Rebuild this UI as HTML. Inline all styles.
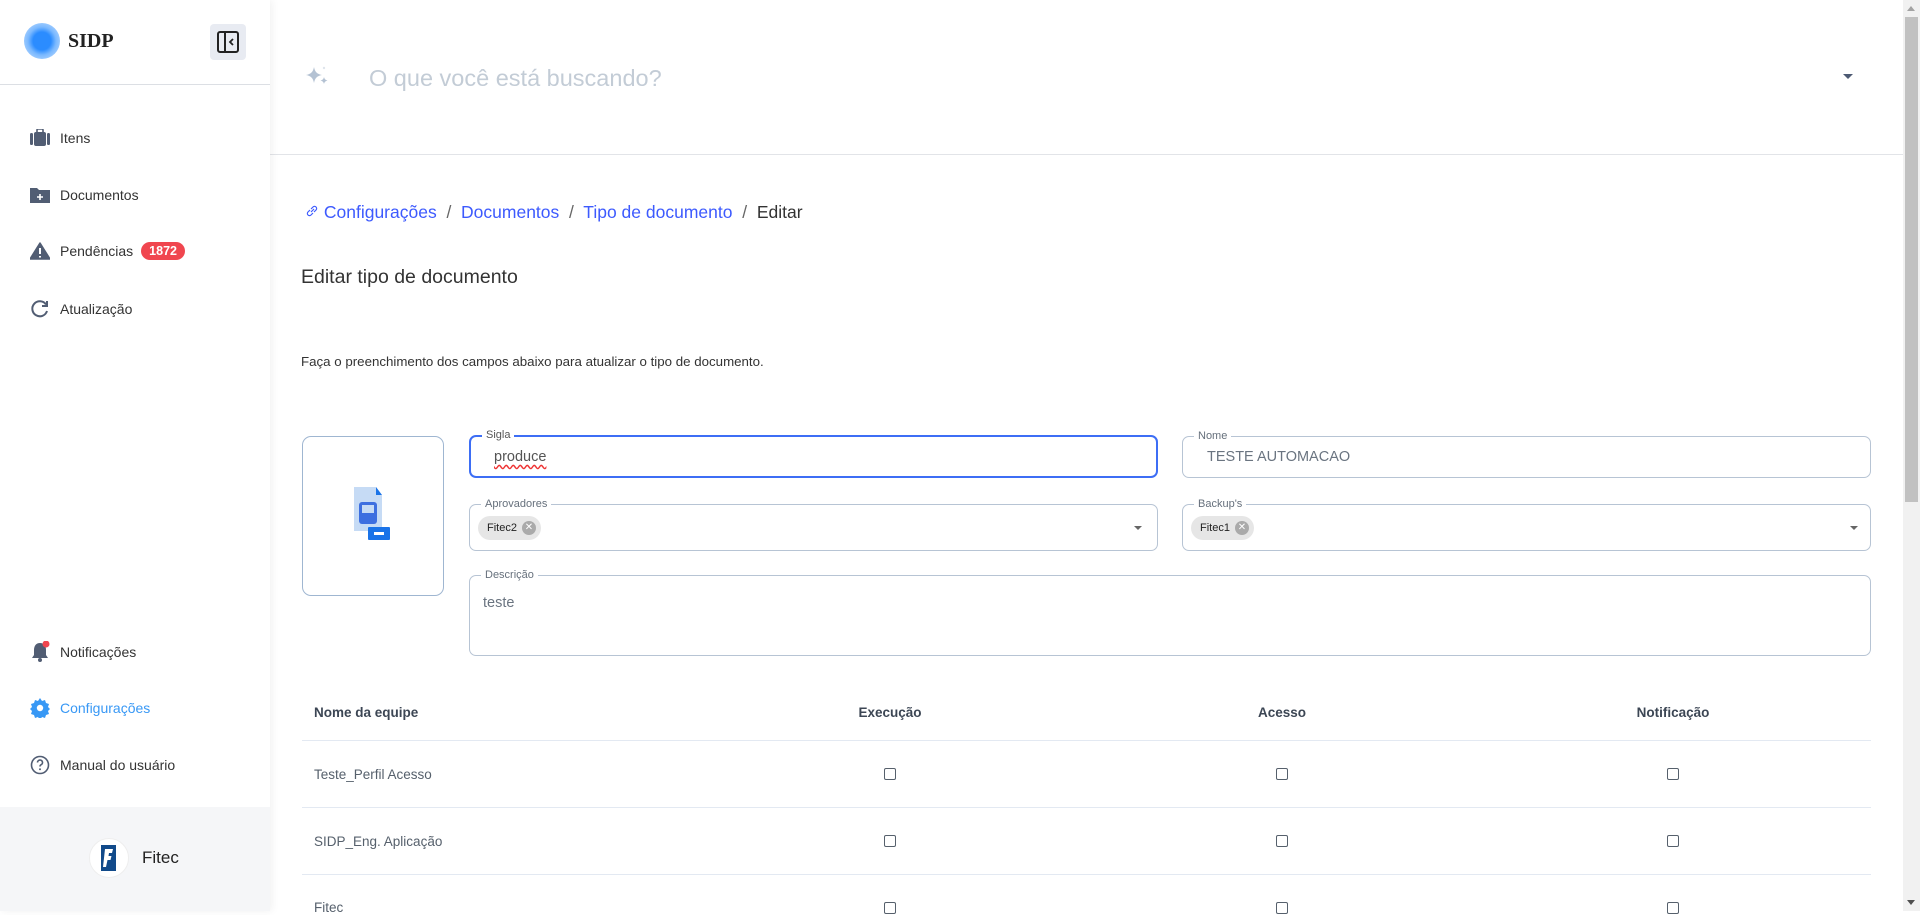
<!DOCTYPE html>
<html><head><meta charset="utf-8"><style>
*{box-sizing:border-box;margin:0;padding:0}
body{width:1920px;height:911px;overflow:hidden;background:#fff;font-family:"Liberation Sans",Arial,sans-serif;position:relative;color:#333}
.abs{position:absolute}
.side{left:0;top:0;width:270px;height:911px;background:#fff;box-shadow:2px 0 8px rgba(0,0,0,.06);z-index:2}
.nav{position:absolute;left:30px;display:flex;align-items:center;font-size:14px;color:#333}
.nav svg{margin-right:10px}
.fld{position:absolute;border:1px solid #b7c4d4;border-radius:7px}
.lbl{position:absolute;top:-8px;left:11px;background:#fff;padding:0 4px;font-size:11px;color:#66707c;line-height:14px}
.chip{position:absolute;left:8px;top:11px;height:24px;border-radius:12px;background:#e6e6e6;font-size:11px;color:#222;display:flex;align-items:center;padding:0 5px 0 9px}
.chip i{display:inline-block;width:14px;height:14px;border-radius:50%;background:#aaa;color:#fff;font-style:normal;font-size:10px;line-height:14px;text-align:center;margin-left:5px}
.arrow{position:absolute;width:0;height:0;border-left:5px solid transparent;border-right:5px solid transparent;border-top:5px solid #555}
.sarrow{position:absolute;width:0;height:0;border-left:4px solid transparent;border-right:4px solid transparent;border-top:4px solid #666}
.th{position:absolute;top:705px;font-size:13.5px;font-weight:bold;color:#3c4654}
.td{position:absolute;font-size:13.5px;color:#56606c}
.cb{position:absolute;width:12px;height:12px;border:1.5px solid #56606c;border-radius:2px}
.hr{position:absolute;left:302px;width:1569px;height:1px;background:#e3e9f2}
</style></head><body>
<div class="abs side">
  <div class="abs" style="left:24px;top:23px;width:36px;height:36px;border-radius:50%;background:radial-gradient(circle,#2b8cff 0 35%,#7bb9ff 55%,#cfe5ff 100%)"></div>
  <div class="abs" style="left:68px;top:30px;font-family:'Liberation Serif',serif;font-weight:bold;font-size:20px;color:#222">SIDP</div>
  <div class="abs" style="left:210px;top:24px;width:36px;height:36px;border-radius:4px;background:#e8ebf2">
    <svg width="36" height="36" viewBox="0 0 36 36"><rect x="8" y="8" width="20" height="20" rx="2" fill="none" stroke="#222" stroke-width="2"/><line x1="15" y1="8" x2="15" y2="28" stroke="#222" stroke-width="2"/><path d="M23 15l-3 3 3 3" fill="none" stroke="#222" stroke-width="1.8"/></svg>
  </div>
  <div class="abs" style="left:0;top:84px;width:270px;height:1px;background:#dcdfe4"></div>
  <div class="nav" style="top:129px"><svg width="20" height="18" viewBox="0 0 20 18"><rect x="4" y="3" width="12" height="14" rx="2" fill="#515d73"/><rect x="7" y="0" width="6" height="4" rx="1" fill="none" stroke="#515d73" stroke-width="1.6"/><rect x="0" y="4" width="3" height="12" rx="1.4" fill="#515d73"/><rect x="17" y="4" width="3" height="12" rx="1.4" fill="#515d73"/></svg>Itens</div>
  <div class="nav" style="top:186px"><svg width="20" height="18" viewBox="0 0 20 18"><path d="M0 2h7l2 2h11v13H0z" fill="#515d73"/><path d="M10 8v6M7 11h6" stroke="#fff" stroke-width="1.6"/></svg>Documentos</div>
  <div class="nav" style="top:242px"><svg width="20" height="18" viewBox="0 0 20 18"><path d="M10 1L0 17h20z" fill="#515d73" stroke="#515d73" stroke-linejoin="round" stroke-width="1.5"/><path d="M10 6v6M10 14v1.5" stroke="#fff" stroke-width="2"/></svg>Pendências<span style="margin-left:8px;background:#f0464f;color:#fff;font-weight:bold;font-size:12.5px;border-radius:10px;padding:2px 8px">1872</span></div>
  <div class="nav" style="top:299px"><svg width="20" height="20" viewBox="0 0 20 20"><path d="M16 5.5A7.5 7.5 0 1 0 17 12" fill="none" stroke="#515d73" stroke-width="2"/><path d="M17 2v5h-5" fill="none" stroke="#515d73" stroke-width="2"/></svg>Atualização</div>
  <div class="nav" style="top:641px"><svg width="20" height="22" viewBox="0 0 20 22"><path d="M10 2c-4 0-6 3-6 7v5l-2 3h16l-2-3V9c0-4-2-7-6-7z" fill="#515d73"/><circle cx="10" cy="19" r="2" fill="#515d73"/><circle cx="16" cy="3" r="3.5" fill="#f0464f"/></svg>Notificações</div>
  <div class="nav" style="top:698px;color:#3898f5"><svg width="20" height="20" viewBox="0 0 20 20"><path d="M10 0l2 3 3-1 1 3 3 1-1 3 2 2-2 2 1 3-3 1-1 3-3-1-2 3-2-3-3 1-1-3-3-1 1-3-2-2 2-2-1-3 3-1 1-3 3 1z" fill="#3898f5"/><circle cx="10" cy="10" r="3.2" fill="#fff"/></svg>Configurações</div>
  <div class="nav" style="top:755px"><svg width="20" height="20" viewBox="0 0 20 20"><circle cx="10" cy="10" r="8.5" fill="none" stroke="#515d73" stroke-width="1.6"/><path d="M7.5 7.5a2.5 2.5 0 1 1 3.5 2.3c-.8.4-1 .9-1 1.7" fill="none" stroke="#515d73" stroke-width="1.6"/><circle cx="10" cy="14.3" r="1" fill="#515d73"/></svg>Manual do usuário</div>
  <div class="abs" style="left:0;top:807px;width:270px;height:104px;background:#f5f6f8"></div>
  <div class="abs" style="left:89px;top:838px;width:40px;height:40px;border-radius:50%;background:#fff;border:1px solid #eee"></div>
  <div class="abs" style="left:101px;top:845px;width:15px;height:26px;background:#114a8a"><svg width="15" height="26" viewBox="0 0 15 26"><path d="M4 4h8l-1 4H8l-.5 3h3l-1 4h-3L5 22H2z" fill="#fff"/></svg></div>
  <div class="abs" style="left:142px;top:848px;font-size:17px;color:#222">Fitec</div>
</div>

<div class="abs" style="left:270px;top:154px;width:1633px;height:1px;background:#e2e4e8"></div>
<svg class="abs" style="left:305px;top:65px" width="26" height="22" viewBox="0 0 26 22"><path d="M9 2c1 5 3 7 8 8-5 1-7 3-8 8-1-5-3-7-8-8 5-1 7-3 8-8z" fill="#b4c2d3"/><path d="M19 12c.5 2 1.5 3 3.5 3.5-2 .5-3 1.5-3.5 3.5-.5-2-1.5-3-3.5-3.5 2-.5 3-1.5 3.5-3.5z" fill="#b4c2d3"/><circle cx="19" cy="3" r="1.2" fill="#dfe5ec"/></svg>
<div class="abs" style="left:369px;top:65px;font-size:23.5px;color:#c3ccd6">O que você está buscando?</div>
<div class="arrow" style="left:1843px;top:74px;border-top-color:#4d5a73"></div>

<div class="abs" style="left:1903px;top:0;width:17px;height:911px;background:#f1f1f1"></div>
<div class="abs" style="left:1905px;top:17px;width:13px;height:485px;background:#c1c1c1"></div>
<div class="arrow" style="left:1907px;top:6px;border-top:none;border-bottom:5px solid #a3a3a3;border-left-width:4px;border-right-width:4px"></div>
<div class="arrow" style="left:1907px;top:900px;border-top:5px solid #505050;border-left-width:4px;border-right-width:4px"></div>

<div class="abs" style="left:305px;top:202px;font-size:17.5px;color:#3d5afe;white-space:nowrap"><svg width="14" height="14" viewBox="0 0 14 14" style="vertical-align:0"><path d="M6 8l3-3M5 6L3 8a2 2 0 0 0 3 3l2-2M9 8l2-2a2 2 0 0 0-3-3L6 5" fill="none" stroke="#3d5afe" stroke-width="1.2"/></svg> Configurações &nbsp;<span style="color:#666">/</span>&nbsp; Documentos &nbsp;<span style="color:#666">/</span>&nbsp; Tipo de documento &nbsp;<span style="color:#666">/</span>&nbsp; <span style="color:#333">Editar</span></div>
<div class="abs" style="left:301px;top:266px;font-size:19.5px;color:#333">Editar tipo de documento</div>
<div class="abs" style="left:301px;top:354px;font-size:13.3px;color:#333">Faça o preenchimento dos campos abaixo para atualizar o tipo de documento.</div>

<div class="abs" style="left:302px;top:436px;width:142px;height:160px;border:1px solid #9fb6d1;border-radius:9px"></div>
<svg class="abs" style="left:352px;top:485px" width="54" height="60" viewBox="0 0 54 60"><path d="M2 2h22l6 8v36H2z" fill="#c6dbf5"/><path d="M24 2l6 8h-6z" fill="#1a73e8"/><rect x="7" y="17" width="18" height="22" rx="3" fill="#3d6fe0"/><rect x="10" y="20" width="12" height="8" fill="#c6dbf5"/><rect x="16" y="42" width="22" height="13" rx="1" fill="#1a73e8"/><rect x="22" y="47" width="10" height="3" fill="#fff"/></svg>

<div class="fld" style="left:469px;top:435px;width:689px;height:43px;border:2px solid #3d6ef5"><div class="lbl" style="top:-9px;color:#555">Sigla</div><div class="abs" style="left:23px;top:12px;font-size:14.5px;color:#555;text-decoration:underline wavy #e33;text-underline-offset:3px">produce</div></div>
<div class="fld" style="left:1182px;top:436px;width:689px;height:42px"><div class="lbl">Nome</div><div class="abs" style="left:24px;top:12px;font-size:14.5px;color:#6a7480">TESTE AUTOMACAO</div></div>
<div class="fld" style="left:469px;top:504px;width:689px;height:47px"><div class="lbl">Aprovadores</div><div class="chip">Fitec2<i>✕</i></div><div class="sarrow" style="right:15px;top:21px"></div></div>
<div class="fld" style="left:1182px;top:504px;width:689px;height:47px"><div class="lbl">Backup's</div><div class="chip">Fitec1<i>✕</i></div><div class="sarrow" style="right:12px;top:21px"></div></div>
<div class="fld" style="left:469px;top:575px;width:1402px;height:81px"><div class="lbl">Descrição</div><div class="abs" style="left:13px;top:19px;font-size:14.5px;color:#6a7480">teste</div></div>

<div class="th" style="left:314px">Nome da equipe</div>
<div class="th" style="left:850px;width:80px;text-align:center">Execução</div>
<div class="th" style="left:1242px;width:80px;text-align:center">Acesso</div>
<div class="th" style="left:1623px;width:100px;text-align:center">Notificação</div>
<div class="hr" style="top:740px"></div>
<div class="hr" style="top:807px"></div>
<div class="hr" style="top:874px"></div>
<div class="td" style="left:314px;top:767px">Teste_Perfil Acesso</div>
<div class="td" style="left:314px;top:834px">SIDP_Eng. Aplicação</div>
<div class="td" style="left:314px;top:900px">Fitec</div>
<div class="cb" style="left:884px;top:768px"></div><div class="cb" style="left:1276px;top:768px"></div><div class="cb" style="left:1667px;top:768px"></div>
<div class="cb" style="left:884px;top:835px"></div><div class="cb" style="left:1276px;top:835px"></div><div class="cb" style="left:1667px;top:835px"></div>
<div class="cb" style="left:884px;top:902px"></div><div class="cb" style="left:1276px;top:902px"></div><div class="cb" style="left:1667px;top:902px"></div>
</body></html>
